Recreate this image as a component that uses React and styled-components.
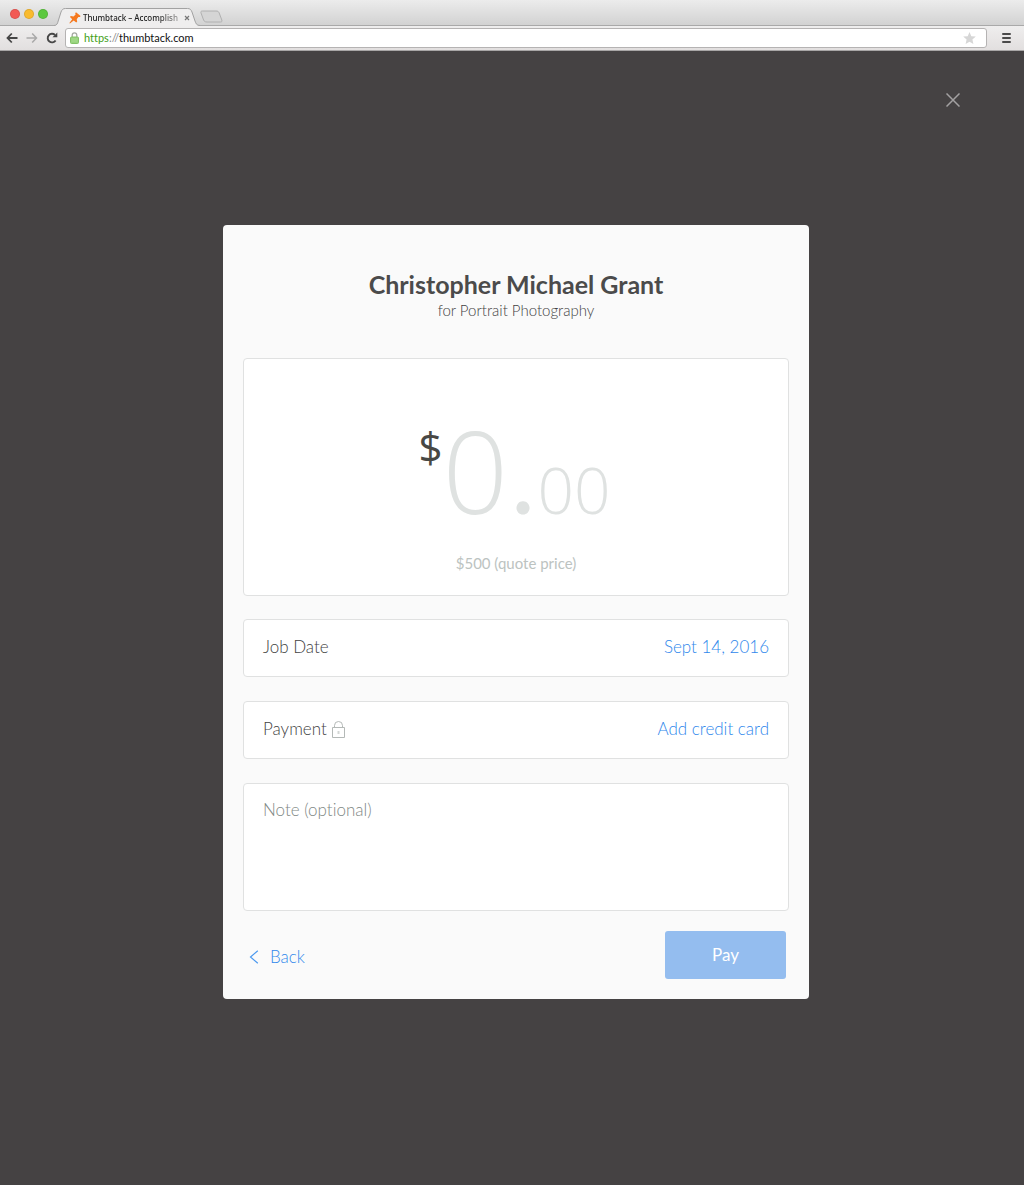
import React, { useState } from 'react';
import styled, { createGlobalStyle, css } from 'styled-components';

const GlobalStyle = createGlobalStyle`
  *, *::before, *::after {
    box-sizing: border-box;
  }

  body {
    margin: 0;
    background-color: #454243;
    color: #424242;
    font-family: Lato, 'Liberation Sans', sans-serif;
    font-size: 17px;
    font-variant-ligatures: none;
    line-height: 24px;
  }

  button, input, textarea {
    margin: 0;
    padding: 0;
    border: 0;
    background: none;
    color: inherit;
    font: inherit;
    font-variant-ligatures: none;
  }

  button {
    cursor: pointer;
  }

  svg {
    display: block;
    flex-shrink: 0;
  }
`;

const StyledPage = styled.div`
  display: flex;
  flex-direction: column;
  min-height: 100vh;
`;

const StyledBrowser = styled.header`
  color: #1c1c1c;
  font-family: 'Noto Sans', 'Open Sans', sans-serif;
  font-size: 10px;
  line-height: 16px;
`;

const StyledTabStrip = styled.div`
  display: flex;
  align-items: flex-end;
  height: 26px;
  padding-left: 10px;
  border-bottom: 1px solid #a9a9a9;
  background: linear-gradient(#ececec, #d2d2d2);
`;

const StyledLights = styled.div`
  display: flex;
  gap: 4px;
  padding-bottom: 6px;
`;

const StyledLight = styled.button`
  width: 10px;
  height: 10px;
  border: 1px solid rgba(0, 0, 0, 0.1);
  border-radius: 50%;
  background-color: ${({ color }) => color};
`;

const StyledTab = styled.div`
  display: grid;
  width: 146px;
  height: 18px;
  margin: 0 0 -1px 6px;

  > * {
    grid-area: 1 / 1;
  }
`;

const StyledTabContent = styled.div`
  display: flex;
  align-items: center;
  padding: 2px 8px 0 15px;
`;

const StyledTabTitle = styled.span`
  flex: 1;
  margin-left: 2px;
  overflow: hidden;
  font-size: 8px;
  font-weight: 500;
  white-space: nowrap;
  mask-image: linear-gradient(to right, #000 75%, rgba(0, 0, 0, 0.3));
`;

const StyledIconButton = styled.button`
  display: flex;
  align-items: center;
  justify-content: center;
`;

const StyledNewTab = styled(StyledIconButton)`
  margin: 0 0 2px;
`;

const StyledToolbar = styled.div`
  display: flex;
  align-items: center;
  height: 25px;
  padding: 0 12px 0 6px;
  border-bottom: 1px solid #a8a6a6;
  background: linear-gradient(#efeeee, #e2dfdf);
`;

const StyledNav = styled.nav`
  display: flex;
  gap: 8px;
  margin-right: 7px;
`;

const StyledAddress = styled.div`
  display: flex;
  flex: 1;
  align-items: center;
  height: 20px;
  margin-right: 14px;
  padding: 0 10px 0 4px;
  border: 1px solid #b5b3b3;
  border-radius: 3px;
  background-color: #fff;
`;

const StyledUrl = styled.div`
  flex: 1;
  margin-left: 5px;
  color: #111;
  font-family: Lato, 'Liberation Sans', sans-serif;
  font-size: 11px;
`;

const StyledScheme = styled.span`
  color: ${({ secure }) => (secure ? '#3f9f16' : '#888')};
`;

const StyledOverlay = styled.main`
  display: flex;
  flex: 1;
  flex-direction: column;
  align-items: center;
  padding: 38px 60px 60px 68px;
`;

const StyledClose = styled(StyledIconButton)`
  align-self: flex-end;
  width: 22px;
  height: 22px;
`;

const StyledModal = styled.form`
  width: 100%;
  max-width: 586px;
  margin-top: 114px;
  padding: 43px 20px 20px;
  border-radius: 4px;
  background-color: #fafafa;
`;

const StyledHeader = styled.div`
  margin-bottom: 38px;
  text-align: center;
`;

const StyledHeading = styled.h1`
  margin: 0;
  color: #4b4b4b;
  font-size: 25px;
  font-weight: 700;
  line-height: 32px;
`;

const StyledSubheading = styled.p`
  margin: 0;
  font-size: 15px;
  font-weight: 300;
  line-height: 20px;
`;

const box = css`
  border: 1px solid #e0e1e1;
  border-radius: 4px;
  background-color: #fff;
`;

const StyledAmount = styled.div`
  ${box}
  display: flex;
  flex-direction: column;
  align-items: center;
  height: 238px;
  margin-bottom: 23px;
  padding-top: 53px;
`;

const StyledPrice = styled.div`
  display: flex;
  align-items: baseline;
  color: #dfe2e1;
  font-family: 'Open Sans', 'Noto Sans', sans-serif;
  font-weight: 300;
`;

const StyledCurrency = styled.label`
  align-self: flex-start;
  padding-top: 11px;
  color: #484844;
  font-size: 42px;
  font-weight: 500;
  line-height: 48px;
`;

const StyledDigits = styled.input`
  width: ${({ small }) => (small ? '76px' : '66px')};
  height: ${({ small }) => (small ? '64px' : '116px')};
  font-size: ${({ small }) => (small ? '64px' : '115px')};
  line-height: ${({ small }) => (small ? '64px' : '116px')};
  outline: none;

  &::placeholder {
    color: #dfe2e1;
    opacity: 1;
  }
`;

const StyledPoint = styled.span`
  width: 29px;
  font-family: Lato, sans-serif;
  font-size: 104px;
  font-weight: 400;
  line-height: 64px;
  text-align: center;
`;

const StyledQuote = styled.p`
  margin: 23px 0 0;
  color: #bcc3c1;
  font-size: 15px;
`;

const StyledRow = styled.div`
  ${box}
  display: flex;
  align-items: center;
  justify-content: space-between;
  height: 58px;
  margin-bottom: 24px;
  padding: 0 19px 2px;
  font-weight: 300;
`;

const StyledLabel = styled.span`
  display: flex;
  align-items: center;
  gap: 5px;
`;

const StyledAction = styled.button`
  color: #2f88ec;
  font-weight: 300;
`;

const StyledNote = styled.textarea`
  ${box}
  display: block;
  width: 100%;
  height: 128px;
  padding: 14px 19px;
  font-weight: 300;
  resize: none;

  &::placeholder {
    color: #7f8885;
    opacity: 1;
  }
`;

const StyledFooter = styled.div`
  display: flex;
  align-items: center;
  justify-content: space-between;
  margin-top: 20px;
  padding: 0 3px 0 6px;
`;

const StyledBack = styled(StyledAction)`
  display: flex;
  align-items: center;
  gap: 11px;
  padding-top: 4px;
`;

const StyledPay = styled.button`
  width: 121px;
  height: 48px;
  border-radius: 3px;
  background-color: #94bdef;
  color: #fff;
`;

const TabShape = () => (
  <svg width="146" height="18" viewBox="0 0 146 18" fill="none">
    <path
      d="M0 17.500C3 17.500 3.500 15.500 4.200 13L7 4C8 1.500 9 .5 11.500 .5H133.500C136 .5 137 1.500 138 4L141 13C142 15.500 142.500 17.500 146 17.500V18H0Z"
      fill="#efeeee"
    />
    <path
      d="M0 17.500C3 17.500 3.500 15.500 4.200 13L7 4C8 1.500 9 .5 11.500 .5H133.500C136 .5 137 1.500 138 4L141 13C142 15.500 142.500 17.500 146 17.500"
      stroke="#a2a2a2"
    />
  </svg>
);

const PinIcon = () => (
  <svg width="12" height="12" viewBox="0 0 12 12" fill="#f5781e">
    <path d="M7 .3L11.600 4.100L10.900 5.100L9.400 5.100L7.700 7.200L8.200 9.600L7.300 10.400L4.700 8.600L.9 11.500L.4 11L3.200 7.200L1 4.900L1.700 4L4.500 4.400L6.600 2.600L6.200 1.200Z" />
  </svg>
);

const Browser = () => (
  <StyledBrowser>
    <StyledTabStrip>
      <StyledLights>
        <StyledLight color="#f25a55" aria-label="Close window" />
        <StyledLight color="#f9bb2f" aria-label="Minimize window" />
        <StyledLight color="#5cc83f" aria-label="Zoom window" />
      </StyledLights>
      <StyledTab>
        <TabShape />
        <StyledTabContent>
          <PinIcon />
          <StyledTabTitle>Thumbtack – Accomplish</StyledTabTitle>
          <StyledIconButton aria-label="Close tab">
            <svg width="10" height="8" viewBox="0 0 10 8" stroke="#777" strokeWidth="1.200">
              <path d="M3 2L7 6M7 2L3 6" />
            </svg>
          </StyledIconButton>
        </StyledTabContent>
      </StyledTab>
      <StyledNewTab aria-label="New tab">
        <svg width="23" height="13" viewBox="0 0 23 13" fill="#d5d5d5" stroke="#b0b0b0">
          <path d="M2.500 1H16C18 1 18.600 1.600 19.200 3L21.800 10C22.200 11.500 21.800 12 20.500 12H7C5 12 4.300 11.500 3.600 10L1 3C.6 1.600 1 1 2.500 1Z" />
        </svg>
      </StyledNewTab>
    </StyledTabStrip>
    <StyledToolbar>
      <StyledNav>
        <StyledIconButton aria-label="Go back">
          <svg width="12" height="12" viewBox="0 0 12 12" fill="none" stroke="#464646" strokeWidth="1.800">
            <path d="M5.800 1.500L1.500 6L5.800 10.500M1.500 6H11.500" />
          </svg>
        </StyledIconButton>
        <StyledIconButton aria-label="Go forward">
          <svg width="12" height="12" viewBox="0 0 12 12" fill="none" stroke="#a9a9a9" strokeWidth="1.500">
            <path d="M6.200 1.500L10.500 6L6.200 10.500M10.500 6H.5" />
          </svg>
        </StyledIconButton>
        <StyledIconButton aria-label="Reload">
          <svg width="12" height="12" viewBox="0 0 12 12" fill="none" stroke="#464646" strokeWidth="1.900">
            <path d="M9.600 8.500A4.300 4.300 0 1 1 9 3" />
            <path d="M11.300 .5V5.300H6.500Z" fill="#464646" stroke="none" />
          </svg>
        </StyledIconButton>
      </StyledNav>
      <StyledAddress>
        <svg width="9" height="12" viewBox="0 0 9 12" fill="none">
          <path d="M2.200 5.500V3.200A2.300 2.300 0 0 1 6.800 3.200V5.500" stroke="#a5a9a2" strokeWidth="1.300" />
          <rect x=".5" y="5" width="8" height="6.500" rx="1" fill="#97d37c" stroke="#84c268" />
          <path d="M1.500 7H7.500M1.500 9H7.500" stroke="#b0e09a" strokeWidth=".7" />
        </svg>
        <StyledUrl role="textbox" aria-label="Address">
          <StyledScheme secure="true">https</StyledScheme>
          <StyledScheme>://</StyledScheme>
          thumbtack.com
        </StyledUrl>
        <StyledIconButton aria-label="Bookmark this page">
          <svg width="13" height="12" viewBox="0 0 13 12" fill="#d6d6d6">
            <path d="M6.500 0L8.300 4.200L12.800 4.600L9.400 7.600L10.400 12L6.500 9.700L2.600 12L3.600 7.600L.2 4.600L4.700 4.200Z" />
          </svg>
        </StyledIconButton>
      </StyledAddress>
      <StyledIconButton aria-label="Menu">
        <svg width="11" height="10" viewBox="0 0 11 10" stroke="#4a4a4a" strokeWidth="2" strokeLinecap="round">
          <path d="M2 1H9M2 5H9M2 9H9" />
        </svg>
      </StyledIconButton>
    </StyledToolbar>
  </StyledBrowser>
);

const PaymentForm = () => {
  const [dollars, setDollars] = useState('');
  const [cents, setCents] = useState('');
  const [note, setNote] = useState('');

  const handleSubmit = (event) => {
    event.preventDefault();
  };

  return (
    <StyledModal onSubmit={handleSubmit}>
      <StyledHeader>
        <StyledHeading>Christopher Michael Grant</StyledHeading>
        <StyledSubheading>for Portrait Photography</StyledSubheading>
      </StyledHeader>
      <StyledAmount>
        <StyledPrice>
          <StyledCurrency htmlFor="dollars">$</StyledCurrency>
          <StyledDigits
            id="dollars"
            inputMode="numeric"
            placeholder="0"
            value={dollars}
            onChange={(event) => setDollars(event.target.value)}
          />
          <StyledPoint>.</StyledPoint>
          <StyledDigits
            small="true"
            aria-label="Cents"
            inputMode="numeric"
            maxLength={2}
            placeholder="00"
            value={cents}
            onChange={(event) => setCents(event.target.value)}
          />
        </StyledPrice>
        <StyledQuote>$500 (quote price)</StyledQuote>
      </StyledAmount>
      <StyledRow>
        <StyledLabel id="job-date">Job Date</StyledLabel>
        <StyledAction type="button" aria-describedby="job-date">
          Sept 14, 2016
        </StyledAction>
      </StyledRow>
      <StyledRow>
        <StyledLabel id="payment">
          Payment
          <svg width="13" height="17" viewBox="0 0 13 17" fill="none" stroke="#b4b9b7">
            <path d="M.5 6.500H12.500V16.500H.5ZM2.500 6.500V4.500A4 4 0 0 1 10.500 4.500V6.500" />
            <path d="M6.500 10V13" strokeWidth="2" stroke="#d3d6d5" />
          </svg>
        </StyledLabel>
        <StyledAction type="button" aria-describedby="payment">
          Add credit card
        </StyledAction>
      </StyledRow>
      <StyledNote
        aria-label="Note"
        placeholder="Note (optional)"
        value={note}
        onChange={(event) => setNote(event.target.value)}
      />
      <StyledFooter>
        <StyledBack type="button">
          <svg width="10" height="14" viewBox="0 0 10 14" fill="none" stroke="#4a98ef" strokeWidth="1.200">
            <path d="M8.800 .7L1.500 7L8.800 13.300" />
          </svg>
          Back
        </StyledBack>
        <StyledPay type="submit">Pay</StyledPay>
      </StyledFooter>
    </StyledModal>
  );
};

const App = () => (
  <StyledPage>
    <GlobalStyle />
    <Browser />
    <StyledOverlay>
      <StyledClose aria-label="Close">
        <svg width="14" height="14" viewBox="0 0 14 14" stroke="#a3a1a2" strokeWidth="1.500">
          <path d="M.5 .5L13.500 13.500M13.500 .5L.5 13.500" />
        </svg>
      </StyledClose>
      <PaymentForm />
    </StyledOverlay>
  </StyledPage>
);

export default App;
